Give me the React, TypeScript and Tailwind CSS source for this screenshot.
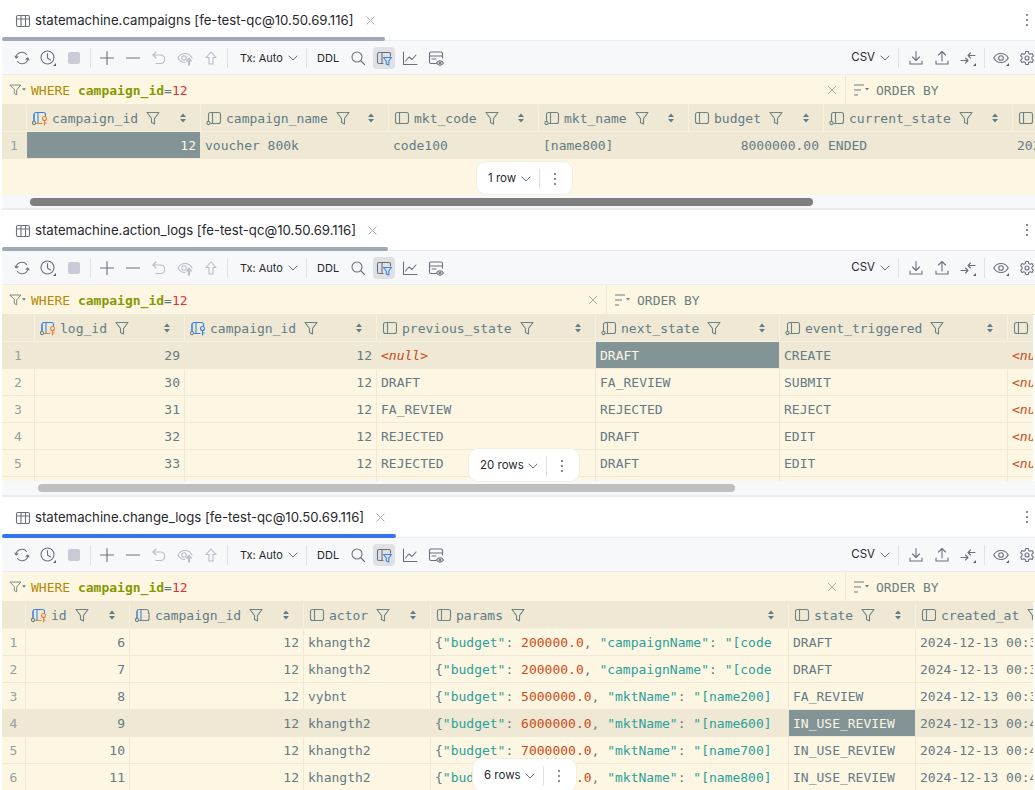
import React from 'react';

const MONO = "font-['DejaVu_Sans_Mono',monospace]";

type ColKind = 'plain' | 'notnull' | 'pk' | 'fk' | 'ref';
interface Col { name: string; w: number; kind: ColKind; right?: boolean }
type Cell = React.ReactNode;
interface PanelProps {
    title: string;
    tabW: number;
    active?: boolean;
    filterW: number;
    gutter: number;
    cols: Col[];
    rows: Cell[][];
    selected: [number, number];
    gridH: number;
    clipRight?: boolean;
    thumb?: { left: number; width: number; dark: boolean };
    scrollH?: number;
    pill: { label: string; left: number; top: number; w: number };
}

const Ico = ({ children, size = 16, className = '' }: { children: React.ReactNode; size?: number; className?: string }) => (
    <svg width={size} height={size} viewBox="0 0 16 16" fill="none" stroke="currentColor" strokeWidth={1.1} strokeLinecap="round" strokeLinejoin="round" className={`shrink-0 ${className}`}>{children}</svg>
);

const Corner = () => <path d="M16 13v3h-3z" fill="#5a5d6b" stroke="none" />;

const ColumnIcon = ({ kind }: { kind: ColKind }) => {
    const gray = '#6f8383';
    if (kind === 'plain') return (
        <Ico className="text-[#6f8383]"><rect x="1.5" y="2.5" width="13" height="11" rx="2" /><path d="M5.5 2.5v11" /></Ico>
    );
    if (kind === 'notnull') return (
        <Ico className="text-[#6f8383]"><path d="M2.5 10.5V4.5a2 2 0 0 1 2-2h8a2 2 0 0 1 2 2v7a2 2 0 0 1-2 2H5" /><path d="M6.5 2.5v11" /><circle cx="2.5" cy="13" r="1.6" /></Ico>
    );
    const blue = '#3b82e6';
    const keyColor = kind === 'pk' ? '#e8813a' : kind === 'fk' ? blue : null;
    return (
        <Ico>
            <path d="M2 10.5V4.5a2 2 0 0 1 2-2h7.5a2 2 0 0 1 2 2V6" stroke={keyColor ? blue : gray} />
            <path d="M6 2.5v11" stroke={blue} />
            <path d="M2 10.5V4.5" stroke={blue} />
            <circle cx="2" cy="13" r="1.6" stroke={gray} />
            {keyColor ? (
                <>
                    <path d="M4.5 13.5H10" stroke={keyColor} />
                    <circle cx="12.5" cy="8.5" r="2" stroke={keyColor} />
                    <path d="M12.5 10.5v4.5M12.5 13h1.7" stroke={keyColor} />
                </>
            ) : (
                <path d="M4.5 13.5h7.5a2 2 0 0 0 2-2V6" stroke={gray} />
            )}
        </Ico>
    );
};

const Funnel = () => (
    <Ico className="text-[#6f8383]"><path d="M2 2.5h12L9.5 8.5v5.500l-3-1.500V8.500z" /></Ico>
);

const Sort = () => (
    <svg width="8" height="10" viewBox="0 0 8 10" fill="#657b83" className="shrink-0"><path d="M4 0.5 7 4H1zM4 9.5 1 6h6z" /></svg>
);

const Kebab = () => (
    <svg width="4" height="14" viewBox="0 0 4 14" fill="#6c707e" className="shrink-0"><circle cx="2" cy="2" r="1.1" /><circle cx="2" cy="7" r="1.1" /><circle cx="2" cy="12" r="1.1" /></svg>
);

const Chevron = () => (
    <svg width="10" height="6" viewBox="0 0 10 6" fill="none" stroke="#6c707e" strokeWidth="1" strokeLinecap="round" strokeLinejoin="round" className="shrink-0"><path d="M1 1l4 4 4-4" /></svg>
);

const Sep = () => <div className="mx-[3px] h-5 w-px shrink-0 bg-[#dfe1e5]" />;

const Btn = ({ children, on }: { children: React.ReactNode; on?: boolean }) => (
    <div className={`flex h-[22px] w-[22px] shrink-0 items-center justify-center rounded-[4px] mx-[2px] ${on ? 'bg-[#dfe1e5]' : ''}`}>{children}</div>
);

const Toolbar = () => (
    <div className="flex h-[34px] shrink-0 items-center justify-between overflow-hidden border-b border-[#ebecf0] bg-[#f7f8fa] pl-[7px] text-[#6c707e]">
        <div className="flex items-center">
            <Btn><Ico><path d="M2 7.5A6 6 0 0 1 12.6 4.5" /><path d="M14 8.5A6 6 0 0 1 3.4 11.5" /><path d="M1 6l1.2 2L4 6.6M15 10l-1.2-2L12 9.4" /></Ico></Btn>
            <Btn><Ico><circle cx="7.5" cy="7.5" r="6.5" /><path d="M7.5 3.5V8l3 2" /><Corner /></Ico></Btn>
            <Btn><div className="h-3 w-3 rounded-[2px] bg-[#c9ccd6]" /></Btn>
            <Sep />
            <Btn><Ico><path d="M8 1.5v13M1.5 8h13" /></Ico></Btn>
            <Btn><Ico><path d="M1.5 8h13" /></Ico></Btn>
            <Btn><Ico className="text-[#b9bcc6]"><path d="M5 2 2 5l3 3" /><path d="M2 5h7.5a4 4 0 0 1 0 8.5H5" /></Ico></Btn>
            <Btn><Ico className="text-[#b9bcc6]"><path d="M8 12.5C4.5 12.5 2 10 1 8c1-2 3.5-4.500 7-4.500S14 6 15 8" /><circle cx="7" cy="8" r="2.200" /><path d="M11.500 15v-4H9.500l2.500-3 2.500 3h-2v4z" fill="#c9ccd6" /></Ico></Btn>
            <Btn><Ico className="text-[#b9bcc6]"><path d="M8 2 3 7.500h3v6.500h4V7.500h3z" /></Ico></Btn>
            <Sep />
            <div className="ml-[9px] mt-[1px] flex w-[63px] items-center gap-[5px] text-[11px] text-[#27282e]">
                <span className="whitespace-nowrap">Tx: Auto</span>
                <Chevron />
            </div>
            <Sep />
            <span className="ml-[7px] mr-[6px] mt-[1px] text-[11px] text-[#27282e]">DDL</span>
            <Btn><Ico><circle cx="7" cy="7" r="5" /><path d="M11 11l3.500 3.500" /></Ico></Btn>
            <Btn on><Ico><path d="M7 13.500H3a1.500 1.500 0 0 1-1.500-1.500V4A1.500 1.500 0 0 1 3 2.500h10A1.500 1.500 0 0 1 14.500 4v2M6 2.500v11" /><path d="M7.500 7.500h8L12.800 11v4l-2.500-1v-3z" stroke="#3b82e6" /></Ico></Btn>
            <Btn><Ico><path d="M1.500 2v12.500H15" /><path d="M3.500 11l3.500-4 3 2.500 4-4.500" /></Ico></Btn>
            <Btn><Ico><path d="M8 13.500H3A1.500 1.500 0 0 1 1.500 12V3.500A1.500 1.500 0 0 1 3 2h10a1.500 1.500 0 0 1 1.500 1.500V8" /><path d="M1.500 6h13M4 9h4" /><path d="M8.500 13c1-1.500 2.200-2.200 3.500-2.200s2.500.7 3.500 2.200c-1 1.500-2.200 2.200-3.500 2.200S9.500 14.500 8.500 13z" /><circle cx="12" cy="13" r="1" /></Ico></Btn>
        </div>
        <div className="mr-[-5px] flex items-center">
            <div className="mr-[5px] mt-[1px] flex items-center gap-[5px] text-[11.5px] text-[#27282e]">
                <span>CSV</span>
                <Chevron />
            </div>
            <Sep />
            <div className="ml-[1px]" />
            <Btn><Ico><path d="M8 1.500V10M4.500 7 8 10.500 11.500 7M2 11v3h12v-3" /></Ico></Btn>
            <Btn><Ico><path d="M8 11V2M4.500 5 8 1.500 11.500 5M2 11v3h12v-3" /></Ico></Btn>
            <Btn><Ico><path d="M1 10.500h7M5.500 8 8 10.500 5.500 13M15 5.500H8M10.500 3 8 5.500 10.500 8" /><Corner /></Ico></Btn>
            <Sep />
            <Btn><Ico><path d="M.8 8c1.500-3 4-4.500 7.200-4.500S13.700 5 15.200 8c-1.500 3-4 4.500-7.200 4.500S2.300 11 .8 8z" /><circle cx="8" cy="8" r="2.300" /><Corner /></Ico></Btn>
            <Btn><Ico><path d="M6.700 1.500h2.600l.4 2 1.500.8 1.900-.7 1.300 2.300-1.500 1.300v1.600l1.500 1.300-1.300 2.300-1.900-.7-1.500.8-.4 2H6.700l-.4-2-1.500-.8-1.900.7-1.300-2.300 1.500-1.300V7.200L1.600 5.900l1.300-2.300 1.900.7 1.500-.8z" /><circle cx="8" cy="8" r="2" /></Ico></Btn>
        </div>
    </div>
);

const Where = ({ w }: { w: number }) => (
    <div className="flex h-[30px] shrink-0 items-center overflow-hidden border-b border-[#eee8d5] bg-[#fdf6e3]">
        <div className="flex h-full shrink-0 items-center border-r border-[#eee8d5]" style={{ width: w }}>
            <div className="ml-[7px] flex w-[20px] shrink-0 items-center text-[#6c7e7e]">
                <Ico size={13}><path d="M1.500 2.500h13L9.500 8.500v6l-3-1.500V8.500z" /></Ico>
                <svg width="4" height="3" viewBox="0 0 5 3" fill="#6c7e7e" className="shrink-0"><path d="M0 0h5L2.500 3z" /></svg>
            </div>
            <span className={`${MONO} ml-[2px] flex-1 pt-[2px] text-[13px] whitespace-nowrap`}>
                <span className="text-[#b58900]">WHERE</span>{' '}
                <span className="font-semibold text-[#859900]">campaign_id</span>
                <span className="text-[#657b83]">=</span>
                <span className="text-[#dc322f]">12</span>
            </span>
            <svg width="10" height="10" viewBox="0 0 10 10" stroke="#a9b0ac" strokeWidth="1" className="mr-[8px] shrink-0"><path d="M1 1l8 8M9 1 1 9" /></svg>
        </div>
        <div className="ml-[8px] flex items-center gap-[7px]">
            <svg width="15" height="12" viewBox="0 0 15 12" fill="none" stroke="#6c7e7e" strokeWidth="1" className="shrink-0"><path d="M0 1h10M0 6h7M0 11h4" /><path d="M11 4h4l-2 2.500z" fill="#6c7e7e" stroke="none" /></svg>
            <span className={`${MONO} pt-[2px] text-[13px] text-[#6b8080]`}>ORDER BY</span>
        </div>
    </div>
);

const Panel = ({ title, tabW, active, filterW, gutter, cols, rows, selected, gridH, clipRight, thumb, scrollH = 13, pill }: PanelProps) => (
    <div className="flex flex-col bg-white">
        <div className="flex h-[41px] shrink-0 items-start justify-between border-b border-[#ebecf0]">
            <div className="relative flex h-[41px] flex-col" style={{ width: tabW }}>
                <div className="flex h-[37px] items-center gap-[4px] pt-[4px] pl-[13px] text-[13.2px] text-[#27282e]">
                    <Ico className="text-[#6c707e]"><rect x="1.500" y="2.500" width="13" height="11" rx="1.500" /><path d="M1.500 6h13M6 2.500v11M10.500 2.500v11" /></Ico>
                    <span className="whitespace-nowrap">{title}</span>
                    <svg width="9" height="9" viewBox="0 0 9 9" stroke="#a8adbd" strokeWidth="1" className="ml-[8px] shrink-0"><path d="M.5.5l8 8M8.500.5l-8 8" /></svg>
                </div>
                <div className={`h-1 w-full rounded-full ${active ? 'bg-[#3574f0]' : 'bg-[#a1a9b8]'}`} />
            </div>
            <div className="mr-[6px] mt-[13px]"><Kebab /></div>
        </div>
        <Toolbar />
        <Where w={filterW} />
        <div className={`flex flex-col overflow-hidden bg-[#fdf6e3] ${MONO} text-[13px] text-[#657b83]`} style={{ height: gridH, marginRight: clipRight ? 2 : 0 }}>
            <div className="flex h-[27px] shrink-0 border-b border-[#f6f0dd] bg-[#eee8d5]">
                <div className="shrink-0 border-r border-[#f6f0dd]" style={{ width: gutter }} />
                {cols.map(c => (
                    <div key={c.name} className="flex shrink-0 items-center overflow-hidden border-r border-[#f6f0dd] pl-[5px] pr-[13px]" style={{ width: c.w }}>
                        <ColumnIcon kind={c.kind} />
                        <span className="ml-[4px] whitespace-nowrap pt-[1px]">{c.name}</span>
                        <span className="ml-[7px] shrink-0"><Funnel /></span>
                        <span className="ml-auto shrink-0"><Sort /></span>
                    </div>
                ))}
            </div>
            {rows.map((row, r) => (
                <div key={r} className={`flex h-[27px] shrink-0 border-b border-[#eee8d5] ${selected[0] === r ? 'bg-[#eee8d5]' : ''}`}>
                    <div className="flex shrink-0 items-center justify-center border-r border-[#eee8d5] pt-[1px] text-[#93a1a1]" style={{ width: gutter }}>{r + 1}</div>
                    {row.map((cell, c) => {
                        const isSel = selected[0] === r && selected[1] === c;
                        return (
                            <div key={c} className={`flex shrink-0 items-center overflow-hidden whitespace-nowrap border-r border-[#eee8d5] px-[4px] pt-[1px] ${cols[c].right ? 'justify-end' : ''} ${isSel ? 'bg-[#839496] text-[#fdf6e3]' : ''}`} style={{ width: cols[c].w }}>{cell}</div>
                        );
                    })}
                </div>
            ))}
        </div>
        {thumb && (
            <div className="flex shrink-0 items-center bg-[#f7f8fa]" style={{ height: scrollH }}>
                <div className={`h-2 rounded-full ${thumb.dark ? 'bg-[#7f7f7f]' : 'bg-[#bfbfbf]'}`} style={{ marginLeft: thumb.left, width: thumb.width }} />
            </div>
        )}
        <FloatPill {...pill} />
    </div>
);

// rows-count pill floats over the grid
const FloatPill = ({ label, left, top, w }: { label: string; left: number; top: number; w: number }) => (
    <div className="absolute flex h-[34px] items-center rounded-[10px] border border-[#f3eee0] bg-white pl-[11px] pt-[1px] text-[11.5px] text-[#27282e]" style={{ left, top, width: w }}>
        <span className="whitespace-nowrap">{label}</span>
        <span className="ml-auto flex items-center">
            <Chevron />
            <span className="ml-[8px] mr-[13px] h-5 w-px bg-[#dfe1e5]" />
            <span className="mr-[15px]"><Kebab /></span>
        </span>
    </div>
);

const Null = () => <span className="italic text-[#cb4b16]">{'<null>'}</span>;

const Json = ({ budget, rest }: { budget: string; rest: React.ReactNode }) => (
    <span>
        {'{'}<span className="text-[#2aa198]">"budget"</span>: <span className="text-[#cb4b16]">{budget}</span>, {rest}
    </span>
);
const Str = ({ k, v }: { k: string; v: string }) => (
    <><span className="text-[#2aa198]">"{k}"</span>: <span className="text-[#2aa198]">"{v}</span></>
);

const d = (t: string) => `2024-12-13 ${t}`;

export default function App() {
    return (
        <div className="relative h-[790px] w-[1035px] overflow-hidden bg-white pl-[2px] font-['Inter',sans-serif]">
            <div className="flex flex-col">
                <Panel
                    title="statemachine.campaigns [fe-test-qc@10.50.69.116]"
                    tabW={383}
                    filterW={844}
                    gutter={25}
                    gridH={90}
                    thumb={{ left: 28, width: 783, dark: true }}
                    pill={{ label: '1 row', left: 476, top: 161, w: 97 }}
                    selected={[0, 0]}
                    cols={[
                        { name: 'campaign_id', w: 174, kind: 'pk', right: true },
                        { name: 'campaign_name', w: 188, kind: 'notnull' },
                        { name: 'mkt_code', w: 150, kind: 'plain' },
                        { name: 'mkt_name', w: 150, kind: 'notnull' },
                        { name: 'budget', w: 135, kind: 'plain', right: true },
                        { name: 'current_state', w: 189, kind: 'notnull' },
                        { name: 'start_date', w: 160, kind: 'plain' },
                    ]}
                    rows={[[12, 'voucher 800k', 'code100', '[name800]', '8000000.00', 'ENDED', d('00:00:00')]]}
                />
                <div className="h-[2px] shrink-0 bg-[#ebecf0]" />
                <Panel
                    title="statemachine.action_logs [fe-test-qc@10.50.69.116]"
                    tabW={386}
                    filterW={605}
                    gutter={33}
                    gridH={166}
                    clipRight
                    thumb={{ left: 36, width: 697, dark: false }}
                    scrollH={14}
                    pill={{ label: '20 rows', left: 468, top: 448, w: 112 }}
                    selected={[0, 3]}
                    cols={[
                        { name: 'log_id', w: 150, kind: 'pk', right: true },
                        { name: 'campaign_id', w: 192, kind: 'fk', right: true },
                        { name: 'previous_state', w: 219, kind: 'plain' },
                        { name: 'next_state', w: 184, kind: 'notnull' },
                        { name: 'event_triggered', w: 228, kind: 'notnull' },
                        { name: 'note', w: 120, kind: 'plain' },
                    ]}
                    rows={[
                        [29, 12, <Null />, 'DRAFT', 'CREATE', <Null />],
                        [30, 12, 'DRAFT', 'FA_REVIEW', 'SUBMIT', <Null />],
                        [31, 12, 'FA_REVIEW', 'REJECTED', 'REJECT', <Null />],
                        [32, 12, 'REJECTED', 'DRAFT', 'EDIT', <Null />],
                        [33, 12, 'REJECTED', 'DRAFT', 'EDIT', <Null />],
                        [34, 12, 'DRAFT', 'FA_REVIEW', 'SUBMIT', <Null />],
                    ]}
                />
                <div className="h-[2px] shrink-0 bg-[#ebecf0]" />
                <Panel
                    title="statemachine.change_logs [fe-test-qc@10.50.69.116]"
                    tabW={394}
                    active
                    filterW={844}
                    gutter={24}
                    gridH={188}
                    clipRight
                    pill={{ label: '6 rows', left: 472, top: 758, w: 105 }}
                    selected={[3, 4]}
                    cols={[
                        { name: 'id', w: 104, kind: 'pk', right: true },
                        { name: 'campaign_id', w: 174, kind: 'ref', right: true },
                        { name: 'actor', w: 127, kind: 'plain' },
                        { name: 'params', w: 358, kind: 'plain' },
                        { name: 'state', w: 127, kind: 'plain' },
                        { name: 'created_at', w: 190, kind: 'plain' },
                    ]}
                    rows={[
                        [6, 12, 'khangth2', <Json budget="200000.0" rest={<Str k="campaignName" v="[code" />} />, 'DRAFT', d('00:36:12')],
                        [7, 12, 'khangth2', <Json budget="200000.0" rest={<Str k="campaignName" v="[code" />} />, 'DRAFT', d('00:36:40')],
                        [8, 12, 'vybnt', <Json budget="5000000.0" rest={<Str k="mktName" v="[name200]" />} />, 'FA_REVIEW', d('00:38:05')],
                        [9, 12, 'khangth2', <Json budget="6000000.0" rest={<Str k="mktName" v="[name600]" />} />, 'IN_USE_REVIEW', d('00:41:22')],
                        [10, 12, 'khangth2', <Json budget="7000000.0" rest={<Str k="mktName" v="[name700]" />} />, 'IN_USE_REVIEW', d('00:42:10')],
                        [11, 12, 'khangth2', <Json budget="8000000.0" rest={<Str k="mktName" v="[name800]" />} />, 'IN_USE_REVIEW', d('00:43:31')],
                    ]}
                />
            </div>
        </div>
    );
}
